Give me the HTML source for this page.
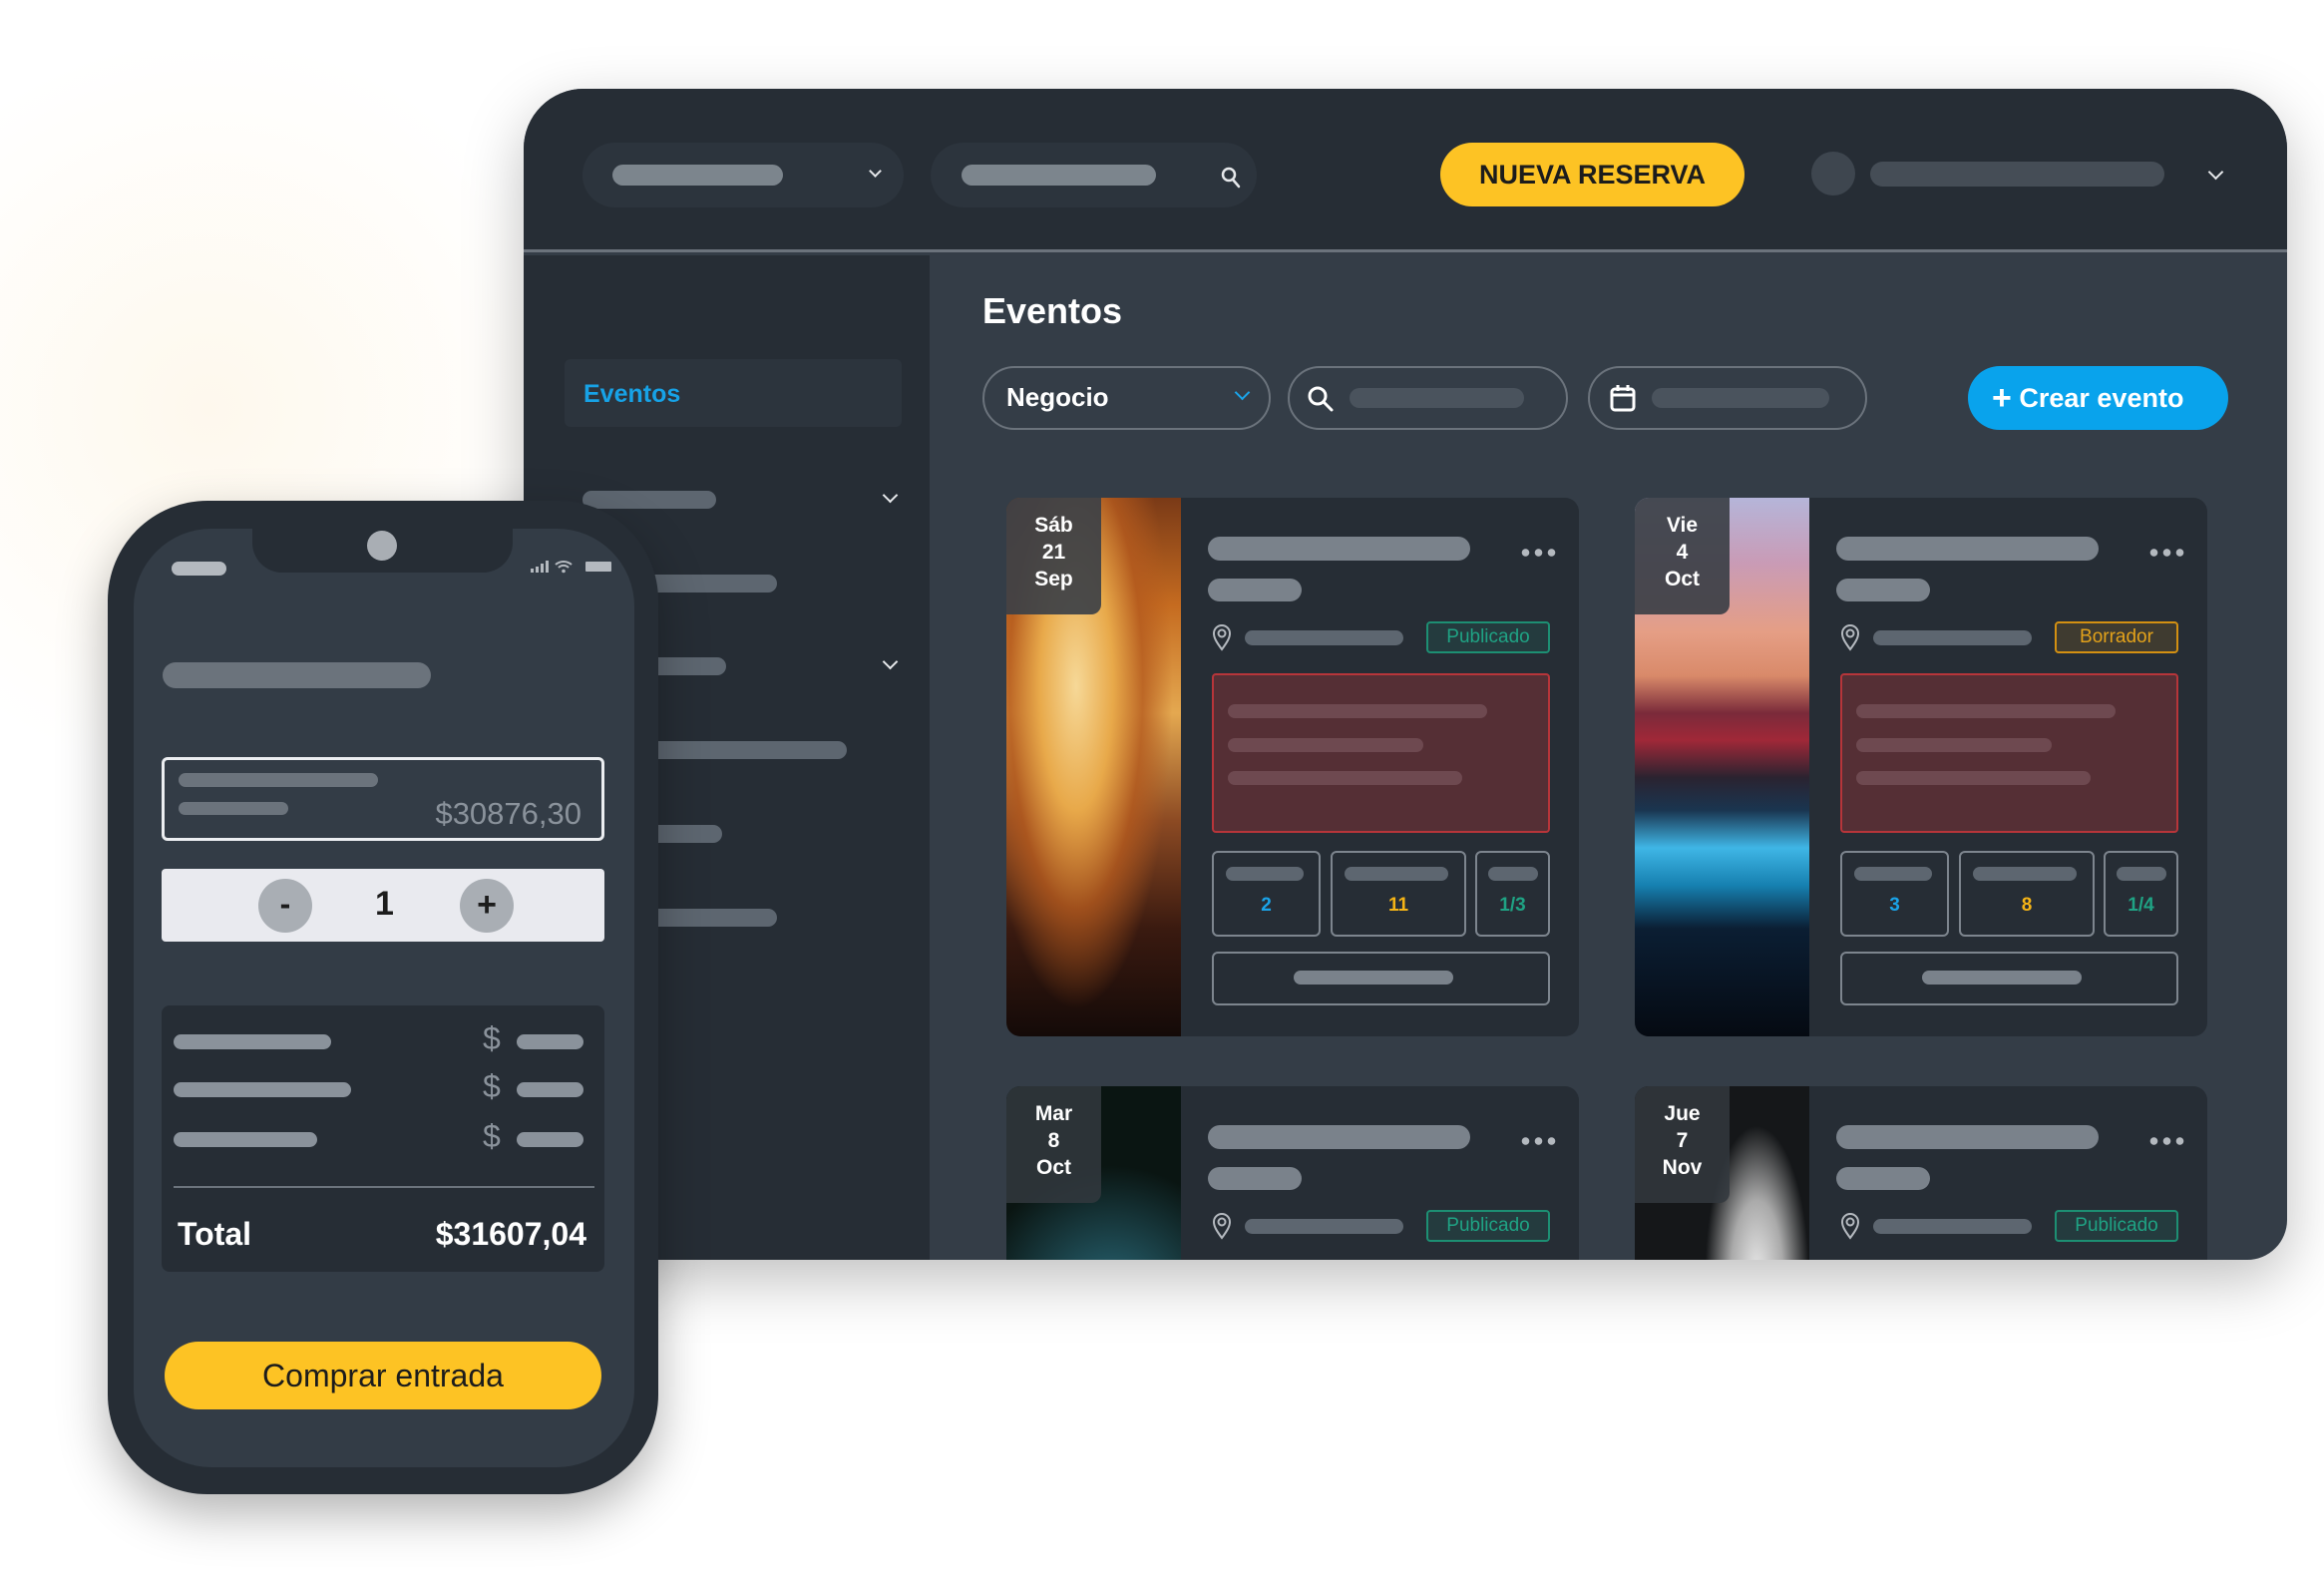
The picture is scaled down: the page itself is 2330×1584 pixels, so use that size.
<!DOCTYPE html>
<html><head><meta charset="utf-8"><style>
*{box-sizing:border-box;margin:0;padding:0}
body{width:2330px;height:1584px;position:relative;overflow:hidden;background:#fff;font-family:"Liberation Sans",sans-serif}
.glow{position:absolute;left:-150px;top:50px;width:800px;height:800px;background:radial-gradient(circle at 45% 45%,rgba(253,238,210,.4),rgba(255,255,255,0) 60%)}
.a{position:absolute}
.win{position:absolute;left:525px;top:89px;width:1768px;height:1174px;border-radius:60px 60px 40px 0;background:#343d47;overflow:hidden;box-shadow:0 20px 60px rgba(0,0,0,.25)}
.hdr{position:absolute;left:0;top:0;width:100%;height:164px;background:#262d35;border-bottom:3px solid #6b737c}
.side{position:absolute;left:0;top:167px;width:407px;height:1010px;background:#262d35}
.pill{position:absolute;background:#2c343d;border-radius:33px}
.bar{position:absolute;border-radius:12px;background:#7a828b}
.dbar{position:absolute;border-radius:10px;background:#4a535d}
.chev{position:absolute;width:11px;height:11px;border-right:2.5px solid #e6e8eb;border-bottom:2.5px solid #e6e8eb;transform:rotate(45deg)}
.flt{position:absolute;top:278px;height:64px;border:2px solid #6b737c;border-radius:32px}
.card{position:absolute;width:574px;height:540px;background:#262d35;border-radius:14px;overflow:hidden}
.img{position:absolute;left:0;top:0;width:175px;height:540px}
.date{position:absolute;left:0;top:0;width:95px;height:117px;background:rgba(60,64,70,.92);border-radius:0 0 10px 0;color:#fff;font-weight:bold;font-size:21px;line-height:27px;text-align:center;padding-top:14px}
.cb{position:absolute;border:2px solid #7d858e;border-radius:6px}
.badge{position:absolute;left:421px;top:124px;width:124px;height:32px;border-radius:4px;font-size:19px;line-height:28px;text-align:center}
.pub{border:2px solid #1d8f73;background:rgba(29,143,115,.15);color:#1fa384}
.bor{border:2px solid #d39012;background:rgba(211,144,18,.15);color:#e3a21a}
.dots{position:absolute;left:514px;top:51px;width:40px;height:8px;background:radial-gradient(circle,#b4b9bf 3.5px,transparent 4px) 0 0/13px 8px repeat-x}
.num{position:absolute;left:0;width:100%;top:42px;text-align:center;font-weight:bold;font-size:19px}
.dol{position:absolute;left:322px;color:#8a929b;font-size:32px}
</style></head><body>
<div class="glow"></div>
<div class="win">
 <div class="hdr">
  <div class="pill" style="left:59px;top:54px;width:322px;height:65px"></div>
  <div class="bar" style="left:89px;top:76px;width:171px;height:21px;background:#7c858d"></div>
  <div class="chev" style="left:348px;top:78px;width:9px;height:9px;border-width:2px"></div>
  <div class="pill" style="left:408px;top:54px;width:327px;height:65px"></div>
  <div class="bar" style="left:439px;top:76px;width:195px;height:21px;background:#7c858d"></div>
  <svg class="a" style="left:698px;top:77px" width="22" height="24" viewBox="0 0 22 24"><circle cx="9" cy="9" r="6" fill="none" stroke="#e6e8eb" stroke-width="2.5"/><path d="M13 14l6 7" stroke="#e6e8eb" stroke-width="2.5" stroke-linecap="round"/></svg>
  <div class="a" style="left:919px;top:54px;width:305px;height:64px;border-radius:32px;background:#fdc324;text-align:center;font-weight:bold;font-size:27px;line-height:64px;color:#1c1c1c">NUEVA RESERVA</div>
  <div class="a" style="left:1291px;top:63px;width:44px;height:44px;border-radius:50%;background:#3e464f"></div>
  <div class="dbar" style="left:1350px;top:73px;width:295px;height:25px;border-radius:13px;background:#454d56"></div>
  <div class="chev" style="left:1691px;top:78px"></div>
 </div>
 <div class="side">
  <div class="a" style="left:41px;top:104px;width:338px;height:68px;background:#2c343d;border-radius:6px;color:#17a2e6;font-weight:bold;font-size:25px;line-height:70px;padding-left:19px">Eventos</div>
  <div class="dbar" style="left:59px;top:236px;width:134px;height:18px;background:#5d6670"></div>
  <div class="chev" style="left:362px;top:235px"></div>
  <div class="dbar" style="left:59px;top:320px;width:195px;height:18px;background:#5d6670"></div>
  <div class="dbar" style="left:59px;top:403px;width:144px;height:18px;background:#5d6670"></div>
  <div class="chev" style="left:362px;top:402px"></div>
  <div class="dbar" style="left:59px;top:487px;width:265px;height:18px;background:#5d6670"></div>
  <div class="dbar" style="left:59px;top:571px;width:140px;height:18px;background:#5d6670"></div>
  <div class="dbar" style="left:59px;top:655px;width:195px;height:18px;background:#5d6670"></div>
 </div>
 <div class="a" style="left:460px;top:202px;color:#fff;font-size:36px;font-weight:bold">Eventos</div>
 <div class="flt" style="left:460px;width:289px"><span class="a" style="left:22px;top:14px;color:#fff;font-size:26px;font-weight:bold">Negocio</span><div class="chev" style="left:253px;top:19px;border-color:#1aa3e8"></div></div>
 <div class="flt" style="left:766px;width:281px"><svg class="a" style="left:16px;top:16px" width="30" height="30" viewBox="0 0 30 30"><circle cx="12" cy="12" r="8" fill="none" stroke="#fff" stroke-width="3"/><path d="M18 18l8 8" stroke="#fff" stroke-width="3" stroke-linecap="round"/></svg><div class="dbar" style="left:60px;top:20px;width:175px;height:20px"></div></div>
 <div class="flt" style="left:1067px;width:280px"><svg class="a" style="left:20px;top:16px" width="26" height="28" viewBox="0 0 26 28"><rect x="2" y="5" width="22" height="21" rx="3" fill="none" stroke="#fff" stroke-width="3"/><path d="M2 11h22M8 1v6M18 1v6" stroke="#fff" stroke-width="3"/></svg><div class="dbar" style="left:62px;top:20px;width:178px;height:20px"></div></div>
 <div class="a" style="left:1448px;top:278px;width:261px;height:64px;border-radius:32px;background:#09a3ec;color:#fff;font-weight:bold;font-size:27px;line-height:64px;padding-left:24px"><span style="font-size:34px;vertical-align:-2px">+</span> Crear evento</div>

 <div class="card" style="left:484px;top:410px">
  <div class="img" style="background:radial-gradient(ellipse at 40% 35%,#f6d897 0%,#e8a94a 25%,rgba(180,90,30,.8) 45%,transparent 65%),linear-gradient(180deg,#7a3a17 0%,#c56b20 20%,#e4a850 40%,#8c4a23 60%,#3a1a10 80%,#140a08 100%)"></div>
  <div class="date">Sáb<br>21<br>Sep</div>
  <div class="bar" style="left:202px;top:39px;width:263px;height:24px"></div>
  <div class="bar" style="left:202px;top:81px;width:94px;height:23px"></div>
  <div class="dots"></div>
  <svg class="a" style="left:206px;top:126px" width="20" height="28" viewBox="0 0 20 28"><path d="M10 26C4 18 2 14 2 10a8 8 0 0 1 16 0c0 4-2 8-8 16z" fill="none" stroke="#b4b9bf" stroke-width="2"/><circle cx="10" cy="10" r="3.5" fill="none" stroke="#b4b9bf" stroke-width="2"/></svg>
  <div class="dbar" style="left:239px;top:133px;width:159px;height:15px;background:#5d6670"></div>
  <div class="badge pub">Publicado</div>
  <div class="a" style="left:206px;top:176px;width:339px;height:160px;background:#552f35;border:2px solid #b7353a;border-radius:4px"></div>
  <div class="dbar" style="left:222px;top:207px;width:260px;height:14px;background:#6e4950"></div>
  <div class="dbar" style="left:222px;top:241px;width:196px;height:14px;background:#6e4950"></div>
  <div class="dbar" style="left:222px;top:274px;width:235px;height:14px;background:#6e4950"></div>
  <div class="cb" style="left:206px;top:354px;width:109px;height:86px"><div class="dbar" style="left:12px;top:14px;width:78px;height:14px;background:#5d6670"></div><div class="num" style="color:#1aa3e8">2</div></div>
  <div class="cb" style="left:325px;top:354px;width:136px;height:86px"><div class="dbar" style="left:12px;top:14px;width:104px;height:14px;background:#5d6670"></div><div class="num" style="color:#f5b416">11</div></div>
  <div class="cb" style="left:470px;top:354px;width:75px;height:86px"><div class="dbar" style="left:11px;top:14px;width:50px;height:14px;background:#5d6670"></div><div class="num" style="color:#1fa384">1/3</div></div>
  <div class="cb" style="left:206px;top:455px;width:339px;height:54px"><div class="bar" style="left:80px;top:17px;width:160px;height:14px"></div></div>
 </div>
 <div class="card" style="left:1114px;top:410px">
  <div class="img" style="background:linear-gradient(180deg,#b5b5d9 0%,#c99bb6 12%,#e59e85 25%,#d98a6a 33%,#7a2a3a 40%,#a02838 45%,#2a2330 52%,#1a3550 58%,#3fb6e6 65%,#1680b0 72%,#0b1e33 80%,#050a12 100%)"></div>
  <div class="date">Vie<br>4<br>Oct</div>
  <div class="bar" style="left:202px;top:39px;width:263px;height:24px"></div>
  <div class="bar" style="left:202px;top:81px;width:94px;height:23px"></div>
  <div class="dots"></div>
  <svg class="a" style="left:206px;top:126px" width="20" height="28" viewBox="0 0 20 28"><path d="M10 26C4 18 2 14 2 10a8 8 0 0 1 16 0c0 4-2 8-8 16z" fill="none" stroke="#b4b9bf" stroke-width="2"/><circle cx="10" cy="10" r="3.5" fill="none" stroke="#b4b9bf" stroke-width="2"/></svg>
  <div class="dbar" style="left:239px;top:133px;width:159px;height:15px;background:#5d6670"></div>
  <div class="badge bor">Borrador</div>
  <div class="a" style="left:206px;top:176px;width:339px;height:160px;background:#552f35;border:2px solid #b7353a;border-radius:4px"></div>
  <div class="dbar" style="left:222px;top:207px;width:260px;height:14px;background:#6e4950"></div>
  <div class="dbar" style="left:222px;top:241px;width:196px;height:14px;background:#6e4950"></div>
  <div class="dbar" style="left:222px;top:274px;width:235px;height:14px;background:#6e4950"></div>
  <div class="cb" style="left:206px;top:354px;width:109px;height:86px"><div class="dbar" style="left:12px;top:14px;width:78px;height:14px;background:#5d6670"></div><div class="num" style="color:#1aa3e8">3</div></div>
  <div class="cb" style="left:325px;top:354px;width:136px;height:86px"><div class="dbar" style="left:12px;top:14px;width:104px;height:14px;background:#5d6670"></div><div class="num" style="color:#f5b416">8</div></div>
  <div class="cb" style="left:470px;top:354px;width:75px;height:86px"><div class="dbar" style="left:11px;top:14px;width:50px;height:14px;background:#5d6670"></div><div class="num" style="color:#1fa384">1/4</div></div>
  <div class="cb" style="left:206px;top:455px;width:339px;height:54px"><div class="bar" style="left:80px;top:17px;width:160px;height:14px"></div></div>
 </div>
 <div class="card" style="left:484px;top:1000px">
  <div class="img" style="background:radial-gradient(circle at 40% 80%,#c8a0a8 0%,#6a5a70 25%,transparent 50%),radial-gradient(circle at 60% 40%,#2a6a7a 0%,transparent 40%),#0a1512"></div>
  <div class="date" style="background:rgba(50,56,62,.85)">Mar<br>8<br>Oct</div>
  <div class="bar" style="left:202px;top:39px;width:263px;height:24px"></div>
  <div class="bar" style="left:202px;top:81px;width:94px;height:23px"></div>
  <div class="dots"></div>
  <svg class="a" style="left:206px;top:126px" width="20" height="28" viewBox="0 0 20 28"><path d="M10 26C4 18 2 14 2 10a8 8 0 0 1 16 0c0 4-2 8-8 16z" fill="none" stroke="#b4b9bf" stroke-width="2"/><circle cx="10" cy="10" r="3.5" fill="none" stroke="#b4b9bf" stroke-width="2"/></svg>
  <div class="dbar" style="left:239px;top:133px;width:159px;height:15px;background:#5d6670"></div>
  <div class="badge pub">Publicado</div>
 </div>
 <div class="card" style="left:1114px;top:1000px">
  <div class="img" style="background:radial-gradient(ellipse at 70% 35%,#e8e8e8 0%,#aaa 15%,transparent 30%),radial-gradient(circle at 30% 90%,#b06040 0%,transparent 25%),#151719"></div>
  <div class="date" style="background:rgba(50,56,62,.85)">Jue<br>7<br>Nov</div>
  <div class="bar" style="left:202px;top:39px;width:263px;height:24px"></div>
  <div class="bar" style="left:202px;top:81px;width:94px;height:23px"></div>
  <div class="dots"></div>
  <svg class="a" style="left:206px;top:126px" width="20" height="28" viewBox="0 0 20 28"><path d="M10 26C4 18 2 14 2 10a8 8 0 0 1 16 0c0 4-2 8-8 16z" fill="none" stroke="#b4b9bf" stroke-width="2"/><circle cx="10" cy="10" r="3.5" fill="none" stroke="#b4b9bf" stroke-width="2"/></svg>
  <div class="dbar" style="left:239px;top:133px;width:159px;height:15px;background:#5d6670"></div>
  <div class="badge pub">Publicado</div>
 </div>
</div>

<div class="a" style="left:108px;top:502px;width:552px;height:996px;border-radius:100px;background:#262d35;box-shadow:0 20px 50px rgba(0,0,0,.3)">
 <div class="a" style="left:26px;top:28px;width:502px;height:941px;border-radius:78px;background:#333c46"></div>
 <div class="a" style="left:145px;top:28px;width:261px;height:44px;border-radius:0 0 30px 30px;background:#262d35"></div>
 <div class="a" style="left:260px;top:30px;width:30px;height:30px;border-radius:50%;background:#a9aeb4"></div>
 <div class="a" style="left:64px;top:61px;width:55px;height:14px;border-radius:7px;background:#b4b9bf"></div>
 <svg class="a" style="left:424px;top:58px" width="84" height="16" viewBox="0 0 84 16"><rect x="0" y="10" width="3" height="4" fill="#b4b9bf"/><rect x="5" y="8" width="3" height="6" fill="#b4b9bf"/><rect x="10" y="5" width="3" height="9" fill="#b4b9bf"/><rect x="15" y="2" width="3" height="12" fill="#b4b9bf"/><path d="M25 6a12 12 0 0 1 16 0M28 9a7 7 0 0 1 10 0" fill="none" stroke="#b4b9bf" stroke-width="2"/><circle cx="33" cy="12.5" r="1.8" fill="#b4b9bf"/><rect x="55" y="3" width="26" height="10" rx="1" fill="#b4b9bf"/></svg>
 <div class="a" style="left:55px;top:162px;width:269px;height:26px;border-radius:13px;background:#6b737c"></div>
 <div class="a" style="left:54px;top:257px;width:444px;height:84px;border:3px solid #eceef1;border-radius:6px">
  <div class="a" style="left:14px;top:13px;width:200px;height:14px;border-radius:7px;background:#6b737c"></div>
  <div class="a" style="left:14px;top:42px;width:110px;height:13px;border-radius:7px;background:#6b737c"></div>
  <div class="a" style="right:20px;top:36px;color:#8a929b;font-size:31px">$30876,30</div>
 </div>
 <div class="a" style="left:54px;top:369px;width:444px;height:73px;border-radius:4px;background:#e9eaef">
  <div class="a" style="left:97px;top:10px;width:54px;height:54px;border-radius:50%;background:#a9aeb4;text-align:center;font-weight:bold;font-size:32px;line-height:50px;color:#1c1c1c">-</div>
  <div class="a" style="left:214px;top:16px;font-weight:bold;font-size:34px;color:#1c1c1c">1</div>
  <div class="a" style="left:299px;top:10px;width:54px;height:54px;border-radius:50%;background:#a9aeb4;text-align:center;font-weight:bold;font-size:34px;line-height:52px;color:#1c1c1c">+</div>
 </div>
 <div class="a" style="left:54px;top:506px;width:444px;height:267px;border-radius:8px;background:#262d35">
  <div class="a" style="left:12px;top:29px;width:158px;height:15px;border-radius:8px;background:#8a929b"></div>
  <div class="a" style="left:12px;top:77px;width:178px;height:15px;border-radius:8px;background:#8a929b"></div>
  <div class="a" style="left:12px;top:127px;width:144px;height:15px;border-radius:8px;background:#8a929b"></div>
  <div class="dol" style="top:15px">$</div>
  <div class="dol" style="top:63px">$</div>
  <div class="dol" style="top:113px">$</div>
  <div class="a" style="left:356px;top:29px;width:67px;height:15px;border-radius:8px;background:#8a929b"></div>
  <div class="a" style="left:356px;top:77px;width:67px;height:15px;border-radius:8px;background:#8a929b"></div>
  <div class="a" style="left:356px;top:127px;width:67px;height:15px;border-radius:8px;background:#8a929b"></div>
  <div class="a" style="left:12px;top:181px;width:422px;height:2px;background:#6b737c"></div>
  <div class="a" style="left:16px;top:211px;color:#fff;font-weight:bold;font-size:32px">Total</div>
  <div class="a" style="right:18px;top:211px;color:#fff;font-weight:bold;font-size:32px">$31607,04</div>
 </div>
 <div class="a" style="left:57px;top:843px;width:438px;height:68px;border-radius:34px;background:#fdc324;text-align:center;font-size:32px;line-height:68px;color:#1c1c1c">Comprar entrada</div>
</div>
</body></html>
